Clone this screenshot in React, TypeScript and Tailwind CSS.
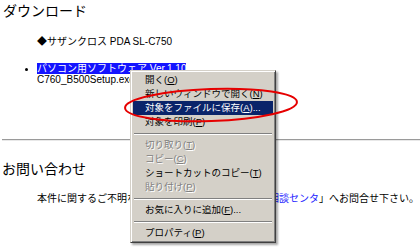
import React from 'react';

type Item = {
  label: string;
  key: string;
  tail?: string;
  disabled?: boolean;
  active?: boolean;
};

const groups: Item[][] = [
  [
    { label: '開く', key: 'O' },
    { label: '新しいウィンドウで開く', key: 'N' },
    { label: '対象をファイルに保存', key: 'A', tail: '...', active: true },
    { label: '対象を印刷', key: 'P' },
  ],
  [
    { label: '切り取り', key: 'T', disabled: true },
    { label: 'コピー', key: 'C', disabled: true },
    { label: 'ショートカットのコピー', key: 'T' },
    { label: '貼り付け', key: 'P', disabled: true },
  ],
  [{ label: 'お気に入りに追加', key: 'F', tail: '...' }],
  [{ label: 'プロパティ', key: 'P' }],
];

const MenuItem: React.FC<{ item: Item }> = ({ item }) => {
  const tone = item.active
    ? 'bg-[#0a246a] text-white'
    : item.disabled
    ? 'text-[#808080] [text-shadow:1px_1px_0_#fff]'
    : 'text-black';
  return (
    <div className={`h-[14px] flex items-center pl-[12px] whitespace-nowrap text-[9.5px] leading-[14px] ${tone}`}>
      {item.label}(<span className="underline">{item.key}</span>){item.tail}
    </div>
  );
};

const ContextMenu: React.FC = () => (
  <div className="absolute left-[130px] top-[70px] w-[146px] bg-[#d4d0c8] border border-t-[#d4d0c8] border-l-[#d4d0c8] border-r-[#404040] border-b-[#404040] shadow-[inset_1px_1px_0_#fff,inset_-1px_-1px_0_#808080,2px_2px_2px_rgba(0,0,0,0.35)] p-[2px]">
    {groups.map((g, i) => (
      <div key={i}>
        {i > 0 && (
          <div className="h-[9px] flex items-center px-[1px]">
            <div className="w-full h-[2px] border-t border-t-[#808080] border-b border-b-white" />
          </div>
        )}
        {g.map((item) => (
          <MenuItem key={item.label} item={item} />
        ))}
      </div>
    ))}
  </div>
);

const App: React.FC = () => {
  return (
    <div className="relative w-[420px] h-[249px] bg-white overflow-hidden text-black font-['Liberation_Sans','Noto_Sans_CJK_JP',sans-serif]">
      <h2 className="pt-[3px] pl-[3px] text-[14px] leading-[16px] font-normal">ダウンロード</h2>

      <p className="mt-[17px] pl-[37px] text-[10px] leading-[12px]">◆サザンクロス PDA SL-C750</p>

      <ul className="mt-[15px] text-[10px]">
        <li className="flex">
          <div className="w-[37px] flex justify-end pr-[9px] pt-[5px]">
            <span className="w-[3px] h-[3px] rounded-full bg-black" />
          </div>
          <div>
            <div className="leading-[11px] whitespace-nowrap">
              <span className="bg-[#1414ff] text-white">パソコン用ソフトウェア Ver.1.10</span>
            </div>
            <div className="leading-[12px]">C760_B500Setup.exe</div>
          </div>
        </li>
      </ul>

      <div className="mt-[53px] ml-[2px] h-[2px] border-t border-t-[#9a9a9a] border-b border-b-[#e8e8e8]" />

      <h2 className="mt-[20px] pl-[2px] text-[14px] leading-[16px] font-normal">お問い合わせ</h2>

      <p className="mt-[16px] pl-[37px] text-[10px] leading-[12px] whitespace-nowrap">
        本件に関するご不明な点は、弊社「<span className="ml-[2px] text-[#1a1aff]">ザウルスお客様相談センタ</span>」へお問合せ下さい。
      </p>

      <ContextMenu />

      <svg className="absolute inset-0 pointer-events-none" width="420" height="249" viewBox="0 0 420 249">
        <ellipse cx="211" cy="105" rx="86" ry="16" fill="none" stroke="#e60000" strokeWidth="2" transform="rotate(-2 211 105)" />
      </svg>
    </div>
  );
};

export default App;
